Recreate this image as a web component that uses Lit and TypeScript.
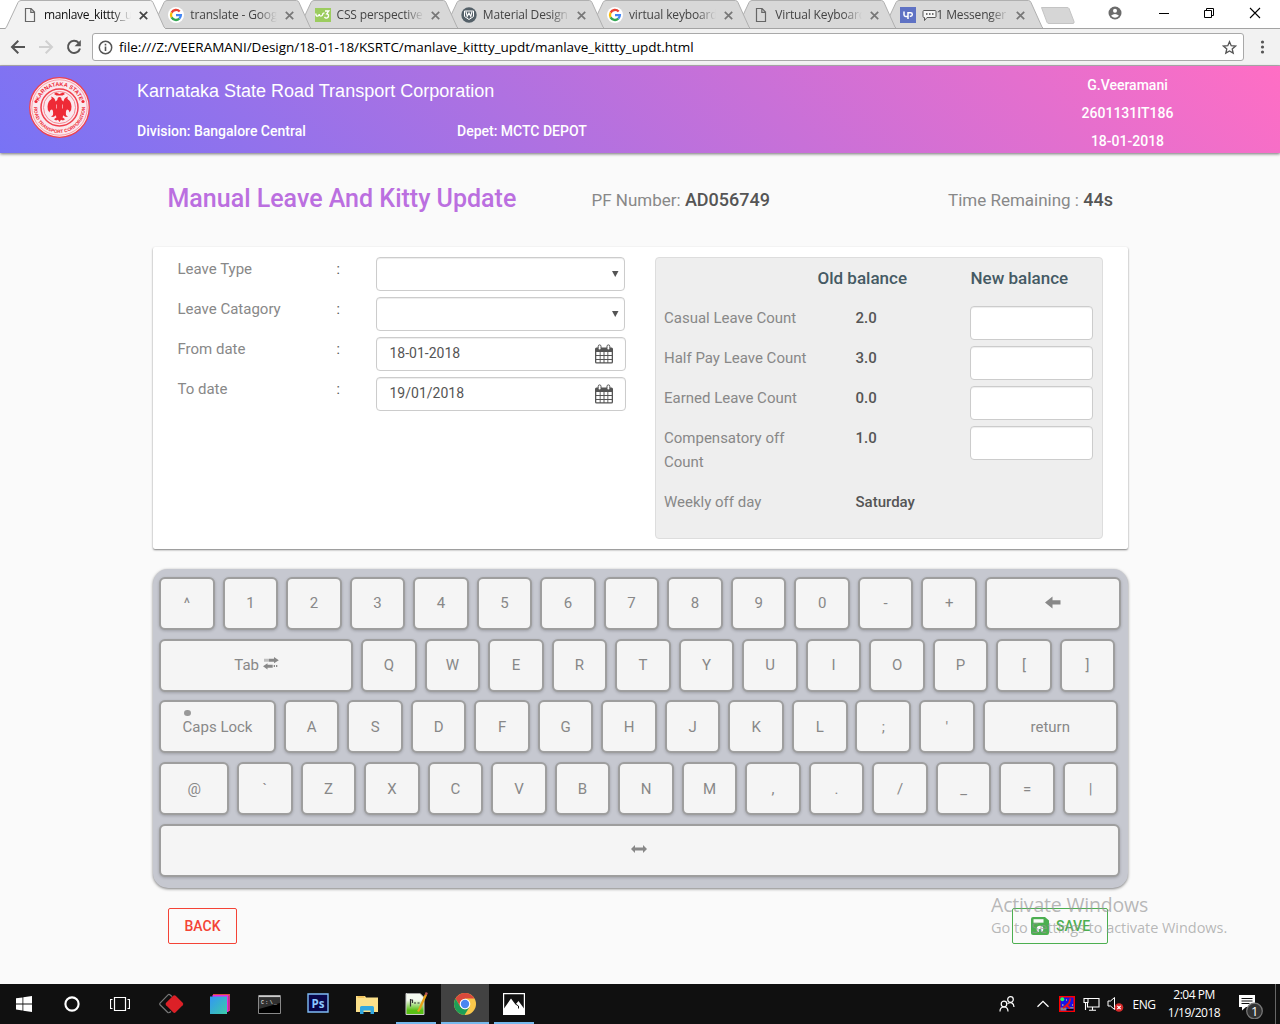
import { LitElement, html, svg, css, TemplateResult } from "lit";
import { customElement, property } from "lit/decorators.js";

const pageIcon = html`<svg width="16" height="16" viewBox="0 0 16 16"><path d="M3.500 1.500h5.600l3.400 3.600v9.400h-9z M8.800 1.700v3.700h3.500" fill="none" stroke="#666" stroke-width="1.200"/></svg>`;
const googleIcon = html`<svg width="16" height="16" viewBox="0 0 16 16"><circle cx="8" cy="8" r="8" fill="#fff"/>
  <g fill="none" stroke-width="2.300"><path d="M11.700 4.600A5 5 0 0 0 3.600 5.600" stroke="#ea4335"/><path d="M3.600 5.600a5 5 0 0 0 0 4.800" stroke="#fbbc05"/><path d="M3.600 10.400A5 5 0 0 0 11.300 11.700" stroke="#34a853"/><path d="M8 8.100H12.900A5 5 0 0 1 11.300 11.700" stroke="#4285f4"/></g></svg>`;
const w3Icon = html`<svg width="16" height="14" viewBox="0 0 16 14"><rect width="16" height="14" fill="#9ccc5f"/><path d="M.8 5.500q0 2.700 1.600 2.700T4.200 6q.3 2.200 1.700 2.200T8 5.500l1.500-.8M10 3h3.800l-2.200 2.900q2 .2 1.900 2-.2 2.200-2.200 2.200-1.200 0-1.800-1.200" fill="none" stroke="#fff" stroke-width="1.300"/></svg>`;
const materialIcon = html`<svg width="16" height="16" viewBox="0 0 16 16"><circle cx="8" cy="8" r="7.700" fill="#546068"/><path d="M3.500 4h9v5.500l-4.500 3-4.500-3z" fill="none" stroke="#fff"/><path d="M5 4.500l1.200 5L8 6l1.800 3.500 1.200-5" fill="none" stroke="#fff" stroke-width="1.100"/></svg>`;
const upIcon = html`<svg width="16" height="16" viewBox="0 0 16 16"><rect width="16" height="16" fill="#5f72c4"/><path d="M4 4.500v3.300q0 1.700 1.700 1.700H8M8 12V5.800h2.700q1.600 0 1.600 1.700t-1.600 1.700H9.800" fill="none" stroke="#fff" stroke-width="1.500"/></svg>`;

const tabs: { title: string; icon: TemplateResult; bubble?: boolean }[] = [
  { title: "manlave_kittty_updt", icon: pageIcon },
  { title: "translate - Google", icon: googleIcon },
  { title: "CSS perspective P", icon: w3Icon },
  { title: "Material Design In", icon: materialIcon },
  { title: "virtual keyboard e", icon: googleIcon },
  { title: "Virtual Keyboard", icon: pageIcon },
  { title: "1 Messenger C", icon: upIcon, bubble: true },
];

@customElement("browser-bar")
export class BrowserBar extends LitElement {
  static styles = css`
    :host { display: block; font-family: "Open Sans", "Noto Sans", sans-serif; }
    svg { display: block; flex: none; }
    .strip { display: flex; height: 28px; background: #fff; border-bottom: 1px solid #a3a3a3; padding-left: 5px; }
    .tab { position: relative; display: flex; align-items: center; width: 162px; height: 29px; margin-right: -15.750px; flex: none; }
    .shape { position: absolute; left: 0; top: 0; }
    .face { position: relative; display: flex; align-items: center; padding: 1px 0 0 17px; }
    .fav { width: 16px; display: flex; justify-content: center; }
    .title { width: 87px; margin-left: 6px; overflow: hidden; white-space: nowrap; font-size: 12px; letter-spacing: -0.150px; line-height: 20px; color: #444;
      -webkit-mask-image: linear-gradient(90deg, #000 78%, transparent); mask-image: linear-gradient(90deg, #000 78%, transparent); display: flex; align-items: center; }
    .active .title { color: #111; letter-spacing: -0.350px; }
    .close { margin-left: 7.500px; }
    .newtab { margin: 6px 0 0 11px; }
    .win { display: flex; margin-left: auto; align-items: flex-start; }
    .tools { display: flex; align-items: center; height: 36px; background: #f2f2f2; border-bottom: 1px solid #b6b4b6; padding-left: 10px; }
    .tools .b { margin-right: 12px; }
    .tools .r { margin-right: 10px; }
    .addr { display: flex; align-items: center; box-sizing: border-box; width: 1152px; height: 28px; border: 1px solid #a9a9a9; border-radius: 3px; background: #fff; padding: 0 6px 0 5px; }
    .url { font-size: 13.500px; letter-spacing: -0.020px; line-height: 20px; color: #000; margin-left: 6px; flex: 1; white-space: nowrap; }
    .dots { margin-left: 10px; }
  `;
  render() {
    return html`
      <div class="strip">
        ${tabs.map((t, i) => html`
          <div class="tab ${i ? "" : "active"}" style="z-index:${10 - i}">
            <svg class="shape" width="162" height="29"><path d="M0 28.500L1.500 27 13 2.500Q14 .5 16 .5H145.500Q147 .5 148 2.500L159 27l1.500 1.500" fill=${i ? "#d8d8d8" : "#f2f2f2"} stroke="#b0b0b0"/>
            ${i ? svg`<path d="M0 28.500H162" stroke="#a3a3a3"/>` : svg`<path d="M1 28.500H160" stroke="#f2f2f2"/>`}</svg>
            <div class="face">
              <span class="fav">${t.icon}</span>
              <span class="title">${t.bubble ? html`<svg width="15" height="13" viewBox="0 0 15 13"><path d="M2 1.500h11q1 0 1 1v5q0 1-1 1H5l-2.500 3v-3H2q-1 0-1-1v-5q0-1 1-1z" fill="#f6f6f6" stroke="#555"/><path d="M4 5h1.500M7 5h1.500M10 5h1.500" stroke="#444" stroke-width="1.500"/></svg>` : ""}${t.title}</span>
              <svg class="close" width="9" height="9" viewBox="0 0 9 9"><path d="M.8.8l7.400 7.400M8.200.8L.8 8.200" stroke=${i ? "#777" : "#444"} stroke-width="1.700"/></svg>
            </div>
          </div>`)}
        <svg class="newtab" width="36" height="19"><path d="M1.500 1.500H27q1.500 0 2 1l5 13q.5 2-1 2H9q-1.500 0-2-1.200z" fill="#d6d6d6" stroke="#c4c4c4"/></svg>
        <svg class="win" width="172" height="28" viewBox="0 0 172 28">
          <circle cx="7" cy="13" r="6.500" fill="#6b6b6b"/><circle cx="7" cy="10.700" r="2" fill="#fff"/><path d="M3 15.700q4-3.400 8 0-4 4-8 0z" fill="#fff"/>
          <g fill="none" stroke="#000"><path d="M51 13.500h10"/><path d="M96.500 10.500h7v7h-7zM98.500 10.500v-2h7v7h-2"/><path d="M142 8l10 10M152 8l-10 10" stroke-width="1.100"/></g>
        </svg>
      </div>
      <div class="tools">
        <svg class="b" width="16" height="16" viewBox="0 0 16 16"><path d="M15 8H2.500M8.300 1.800L2 8l6.300 6.200" fill="none" stroke="#555" stroke-width="2"/></svg>
        <svg class="b" width="16" height="16" viewBox="0 0 16 16"><path d="M1 8h12.500M7.700 1.800L14 8l-6.300 6.200" fill="none" stroke="#d0d0d0" stroke-width="2"/></svg>
        <svg class="r" width="16" height="16" viewBox="0 0 16 16"><path d="M12.700 3.800A6.100 6.100 0 1 0 14 9.500" fill="none" stroke="#555" stroke-width="2"/><path d="M14.800 1v6.200H8.600z" fill="#555"/></svg>
        <div class="addr">
          <svg width="15" height="15" viewBox="0 0 15 15"><circle cx="7.500" cy="7.500" r="6.200" fill="none" stroke="#555" stroke-width="1.500"/><path d="M7.500 6.500v4.500M7.500 3.800v1.600" stroke="#555" stroke-width="1.600"/></svg>
          <span class="url">file:///Z:/VEERAMANI/Design/18-01-18/KSRTC/manlave_kittty_updt/manlave_kittty_updt.html</span>
          <svg width="15" height="15" viewBox="0 0 15 15"><path d="M7.500 1.700l1.700 4 4.300.4-3.300 2.800 1 4.200-3.700-2.200-3.700 2.200 1-4.200L1.500 6.100l4.300-.4z" fill="none" stroke="#555" stroke-width="1.300"/></svg>
        </div>
        <svg class="dots" width="16" height="16"><g fill="#555"><circle cx="8.500" cy="3" r="1.600"/><circle cx="8.500" cy="8" r="1.600"/><circle cx="8.500" cy="13" r="1.600"/></g></svg>
      </div>`;
  }
}

@customElement("corp-header")
export class CorpHeader extends LitElement {
  static styles = css`
    :host { display: block; position: relative; z-index: 1; font-family: Roboto, sans-serif; }
    .bar { display: grid; grid-template-columns: 137px 320px 565px 211px; height: 87px; background: linear-gradient(45deg, #7873f5, #ff6ec4); color: #fff; box-shadow: 0 1px 3px rgba(0,0,0,.55); font-size: 14px; font-weight: 500; line-height: 28px; }
    .logo { padding: 11px 0 0 29px; }
    svg { display: block; }
    .left { grid-column: span 2; display: grid; grid-template-columns: 320px 1fr; grid-template-rows: 51px 28px; }
    .name { grid-column: span 2; font: 18px/50px "Liberation Sans", Arial, sans-serif; }
    .user { text-align: center; padding-top: 5px; }
    .ring { font: 700 5.600px "Liberation Sans", sans-serif; fill: #ee2a36; }
    .low { font-size: 4.700px; }
  `;
  render() {
    return html`<div class="bar">
      <div class="logo"><svg width="61" height="61" viewBox="0 0 61 61">
        <circle cx="30.500" cy="30.500" r="29.800" fill="#fbe9ee" stroke="#f0404e" stroke-width="1.300"/>
        <circle cx="30.500" cy="30.500" r="27.700" fill="none" stroke="#f58a94" stroke-width=".8"/>
        <circle cx="30.500" cy="30.500" r="18.500" fill="none" stroke="#f0404e" stroke-width="1.500"/>
        <circle cx="30.500" cy="30.500" r="16" fill="none" stroke="#f58a94" stroke-width="1"/>
        <defs><path id="t" d="M9 30.500a21.500 21.500 0 0 1 43 0"/><path id="u" d="M5 30.500a25.500 25.500 0 0 0 51 0"/></defs>
        <text class="ring" text-anchor="middle"><textPath href="#t" startOffset="50%">KARNATAKA STATE</textPath></text>
        <text class="ring low" text-anchor="middle"><textPath href="#u" startOffset="50%">ROAD TRANSPORT CORPORATION</textPath></text>
        <g fill="#ee2a36"><circle cx="7" cy="24.500" r="1.600"/><circle cx="54" cy="24.500" r="1.600"/>
        <path d="M30.500 20q2 0 2.200 3l1.800 1.500q.5-4 4.500-5-1.500 2 0 3 3 1.500 3.500 7 .3 4-2 6-.5-3-2.500-3-1.500 1-1 5.500l2 2-3-.2-1.500-1.500-1 2 2.500 2-2 1.200-2-.8-1.500 2.200-1.500-2.200-2 .8-2-1.200 2.500-2-1-2-1.500 1.500-3 .2 2-2q.5-4.500-1-5.500-2 0-2.500 3-2.300-2-2-6 .5-5.500 3.500-7 1.500-1 0-3 4 1 4.500 5l1.800-1.500q.2-3 2.200-3z"/>
        <path d="M25 17l2-1.500 3.500 1.500 3.500-1.500 2 1.500-2.500 1.500h-6z"/></g>
        <path d="M27.500 27.500v4M33.500 27.500v4" fill="none" stroke="#fbe9ee" stroke-width=".6"/>
      </svg></div>
      <div class="left"><div class="name">Karnataka State Road Transport Corporation</div><div>Division: Bangalore Central</div><div>Depet: MCTC DEPOT</div></div>
      <div class="user"><div>G.Veeramani</div><div>2601131IT186</div><div>18-01-2018</div></div>
    </div>`;
  }
}

const calendar = html`<svg width="20" height="20" viewBox="0 0 20 20"><path d="M1 5q0-1.500 1.500-1.500h15Q19 3.500 19 5v13q0 1.500-1.500 1.500h-15Q1 19.500 1 18z" fill="#555"/><path d="M2.300 8h3.400v3H2.300zM6.600 8h2.900v3H6.600zM10.500 8h2.900v3h-2.900zM14.300 8h3.400v3h-3.400zM2.300 12h3.400v3H2.300zM6.600 12h2.900v3H6.600zM10.500 12h2.900v3h-2.900zM14.300 12h3.400v3h-3.400zM2.300 16h3.400v2.300H2.300zM6.600 16h2.900v2.300H6.600zM10.500 16h2.900v2.300h-2.900zM14.300 16h3.400v2.300h-3.400z" fill="#fff"/><rect x="4.200" y=".9" width="2.800" height="5" rx="1.400" fill="#fff" stroke="#555"/><rect x="13" y=".9" width="2.800" height="5" rx="1.400" fill="#fff" stroke="#555"/></svg>`;

@customElement("leave-form")
export class LeaveForm extends LitElement {
  static styles = css`
    :host { display: block; font-family: Roboto, sans-serif; }
    svg { display: block; }
    .head { display: flex; align-items: flex-start; box-sizing: border-box; height: 94px; padding: 27px 0 0 14.500px; font-size: 17px; color: #888; white-space: nowrap; line-height: 39px; }
    .head h1 { margin: 0; width: 424px; font-size: 25px; font-weight: 500; color: #bb6fe0; line-height: 38px; }
    .pf { width: 356.500px; }
    .time { line-height: 40px; }
    .head b { font-size: 18px; }
    b { font-weight: 500; color: #555; }
    .card { display: flex; align-items: flex-start; box-sizing: border-box; height: 302px; padding: 10px 25px 10px 24.500px; background: #fff; border-radius: 2px; box-shadow: 0 1px 2px rgba(0,0,0,.5); color: #888; font-size: 15px; line-height: 24px; justify-content: space-between; }
    .row { display: grid; grid-template-columns: 159px 39.500px 250px; height: 40px; }
    .colon { color: #555; font-size: 14px; }
    .box { display: flex; align-items: center; justify-content: space-between; box-sizing: border-box; height: 34px; border: 1px solid #ccc; border-radius: 4px; background: #fff; box-shadow: inset 0 1px 1px rgba(0,0,0,.075); color: #555; padding: 0 11px 1px 12.500px; font-size: 14px; }
    .date { padding-bottom: 2px; }
    .select { width: 249px; justify-content: flex-end; padding-right: 5px; }
    .panel { box-sizing: border-box; width: 448px; height: 282px; border: 1px solid #ddd; border-radius: 4px; background: #eee; padding: 8px 9px 0 8px; }
    .bal { display: grid; grid-template-columns: 191.500px 114.500px 123px; min-height: 40px; }
    .bal span { max-width: 150px; }
    .bal.tall { height: 64px; }
    .bhead { height: 40px; font-size: 17px; font-weight: 500; color: #455a64; display: grid; grid-template-columns: 153.500px 153px 1fr; }
  `;
  render() {
    const arrow = html`<svg width="7" height="6"><path d="M0 0h6.500L3.250 6z" fill="#555"/></svg>`;
    const fields = [["Leave Type"], ["Leave Catagory"], ["From date", "18-01-2018"], ["To date", "19/01/2018"]];
    const bal = [["Casual Leave Count", "2.0"], ["Half Pay Leave Count", "3.0"], ["Earned Leave Count", "0.0"], ["Compensatory off Count", "1.0"], ["Weekly off day", "Saturday"]];
    return html`
      <div class="head"><h1>Manual Leave And Kitty Update</h1><div class="pf">PF Number: <b>AD056749</b></div><div class="time">Time Remaining : <b>44s</b></div></div>
      <div class="card">
        <div>${fields.map(([l, v]) => html`<div class="row"><span>${l}</span><span class="colon">:</span>
          ${v ? html`<div class="box"><span class="date">${v}</span>${calendar}</div>` : html`<div class="box select">${arrow}</div>`}</div>`)}</div>
        <div class="panel">
          <div class="bhead"><span></span><span>Old balance</span><span>New balance</span></div>
          ${bal.map(([l, v], i) => html`<div class="bal ${i === 3 ? "tall" : ""}"><span>${l}</span><b>${v}</b>${i < 4 ? html`<div class="box"></div>` : ""}</div>`)}
        </div>
      </div>`;
  }
}

@customElement("key-cap")
export class KeyCap extends LitElement {
  @property({ type: Number }) w = 55.550;
  static styles = css`
    :host { display: block; flex: none; }
    .key { display: flex; align-items: center; justify-content: center; box-sizing: border-box; height: 53px; border: 2px solid #9e9e9e; border-radius: 6px; background: #f5f5f5; box-shadow: 0 1px 3px rgba(0,0,0,.2); font: 15px/24px Roboto, sans-serif; color: #888; padding-bottom: var(--lift, 1px); }
  `;
  render() {
    return html`<div class="key" style="width:${this.w}px"><slot></slot></div>`;
  }
}

@customElement("key-board")
export class KeyBoard extends LitElement {
  static styles = css`
    :host { display: block; }
    .board { display: flex; flex-direction: column; gap: 8.720px; box-sizing: border-box; height: 319px; margin-top: 20px; padding: 8px 6.200px; background: #c6c8d0; border-radius: 15px; box-shadow: 0 1px 3px rgba(0,0,0,.5); }
    .row { display: flex; gap: 7.970px; }
    .low { --lift: 0px; }
    svg { display: block; }
    .inline { display: flex; align-items: center; gap: 4px; padding-left: 1px; }
    .inline svg { margin-top: -3px; }
    .caps { position: relative; }
    .dot { position: absolute; left: 1.500px; top: -5px; width: 7px; height: 6.500px; border-radius: 50%; background: #999; }
  `;
  render() {
    const keys = (s: string) => s.split(" ").map((k) => html`<key-cap>${k}</key-cap>`);
    return html`<div class="board">
      <div class="row">${keys("^ 1 2 3 4 5 6 7 8 9 0 - +")}<key-cap .w=${135.700}><svg width="16" height="14" viewBox="0 0 16 14"><path d="M0 6.500L7.500.500v3.700H15.500v4.300H7.500v4z" fill="#888"/></svg></key-cap></div>
      <div class="row"><key-cap .w=${194}><span class="inline">Tab <svg width="16" height="13" viewBox="0 0 16 13"><g fill="#888"><path d="M1.500 1.700h1v3h-1zM3.500 1.700h1v3h-1zM5.500 1.700H11V0l4.800 3.200L11 6.300V4.700H5.500zM9.700 7.700H4.500V6.200L0 9.300l4.500 3.200V10.700H9.700zM10.700 8h1.300v2h-1.300zM13 8h1.300v2H13z"/></g></svg></span></key-cap>${keys("Q W E R T Y U I O P [ ]")}</div>
      <div class="row low"><key-cap .w=${116.700}><span class="caps"><i class="dot"></i>Caps Lock</span></key-cap>${keys("A S D F G H J K L ; '")}<key-cap .w=${135.500}>return</key-cap></div>
      <div class="row low"><key-cap .w=${70}>@</key-cap>${keys("` Z X C V B N M , . / _ = |")}</div>
      <div class="row"><key-cap .w=${960.500}><svg width="16" height="12" viewBox="0 0 16 12"><path d="M0 5l4-4v2.500h8V1l4 4-4 4V6.500H4V9z" fill="#888"/></svg></key-cap></div>
    </div>`;
  }
}

@customElement("task-bar")
export class TaskBar extends LitElement {
  static styles = css`
    :host { display: block; font-family: "Open Sans", "Noto Sans", sans-serif; }
    .bar { display: flex; height: 40px; background: #101010; color: #fff; }
    svg { display: block; }
    .cell { display: flex; align-items: center; justify-content: center; box-sizing: border-box; width: 48px; height: 40px; flex: none; }
    .apps { display: flex; gap: 1px; margin-left: 3px; }
    .run { width: 40px; margin: 0 4px; border-bottom: 2px solid #76b9ed; padding-top: 2px; }
    .on { background: #424242; border-bottom: 2px solid #76b9ed; padding-top: 2px; }
    .ps-cell { padding-bottom: 3px; }
    .tray { display: flex; margin-left: auto; align-items: center; font-size: 12px; }
    .people { margin-left: 6px; }
    .tray .s { width: 24px; }
    .lang { width: 34px; text-align: center; letter-spacing: -0.450px; }
    .clock { width: 66px; text-align: center; line-height: 18px; letter-spacing: -0.500px; white-space: nowrap; margin: 0 3px 1px 0; }
    .edge { width: 4px; height: 40px; border-left: 1px solid #666; margin-left: 3px; }
    .ps { font: 700 13px "Open Sans", sans-serif; fill: #8cc8ff; }
    .sm { font: 5px "Liberation Mono", monospace; fill: #fff; }
    .n { font: 13px "Open Sans", sans-serif; fill: #fff; }
  `;
  render() {
    return html`<div class="bar">
      <div class="cell"><svg width="16" height="16" viewBox="0 0 16 16"><path d="M0 2.300L6.500 1.400V7.500H0zM7.300 1.300L16 0v7.500H7.300zM0 8.400h6.500v6.100L0 13.600zM7.300 8.400H16V16l-8.700-1.300z" fill="#fff"/></svg></div>
      <div class="cell"><svg width="16" height="16"><circle cx="8" cy="8" r="6.600" fill="none" stroke="#fff" stroke-width="2.100"/></svg></div>
      <div class="cell"><svg width="20" height="14" viewBox="0 0 20 14"><path d="M4.500.5h11v13h-11zM2.500 2.500h-2v9h2M17.500 2.500h2v9h-2" fill="none" stroke="#fff" stroke-width="1.200"/></svg></div>
      <div class="apps">
        <div class="cell"><svg width="26" height="22" viewBox="0 0 26 22"><path d="M14 3.500L11.500 1.500 Q10.800 1 10 1.800L2 10.200Q1.300 11 2 11.800L9.800 19.500Q10.800 20.300 13 18.500" fill="none" stroke="#777" stroke-width="1.200"/><rect x="9.700" y="4.300" width="13.500" height="13.500" rx="1.800" fill="#dc2027" transform="rotate(45 16.400 11)"/></svg></div>
        <div class="cell"><svg width="22" height="22" viewBox="0 0 22 22"><defs><linearGradient id="g" x2="1" y2="1"><stop stop-color="#3296f5"/><stop offset="1" stop-color="#3ccaa8"/></linearGradient></defs><path d="M4 1h17v17H4z" fill="#d94a3c"/><path d="M3.500 2h16v17h-16z" fill="#e32de0"/><path d="M19 3h2v14h-2z" fill="#c6308c"/><path d="M1 3.500h17V21H1z" fill="url(#g)"/></svg></div>
        <div class="cell"><svg width="23" height="19" viewBox="0 0 23 19"><path d="M.5.5h22v18H.5z" fill="#000" stroke="#888"/><path d="M1 .500h21v1.800H1z" fill="#ccc"/><path d="M1 3h21v5L1 14z" fill="#444" opacity=".7"/><text x="3" y="9" class="sm" textLength="16">C:\\_</text></svg></div>
        <div class="cell ps-cell"><svg width="22" height="20" viewBox="0 0 22 20"><path d="M1 1h20v18H1z" fill="#08064a" stroke="#7fbcf5" stroke-width="1.400"/><text x="4.500" y="14.700" class="ps" textLength="13" lengthAdjust="spacingAndGlyphs">Ps</text></svg></div>
        <div class="cell"><svg width="22" height="19" viewBox="0 0 22 19"><path d="M0 1h9l1 1.500h12V17H0z" fill="#fbe08a"/><path d="M1.500 1.500h7v1h-7z" fill="#e8a935"/><path d="M4 19v-6.500q0-1.500 1.500-1.500h11q1.500 0 1.500 1.500V19h-3.500v-3.500h-7V19z" fill="#33a8e0"/></svg></div>
        <div class="cell run"><svg width="23" height="24" viewBox="0 0 23 24"><defs><linearGradient id="n" x2="0" y2="1"><stop offset=".3" stop-color="#f5faf0"/><stop offset=".8" stop-color="#59c014"/></linearGradient></defs><path d="M1 1.500h14l4 4v17H1z" fill="url(#n)" stroke="#ccc"/><path d="M2.500 1.500h13" stroke="#777" stroke-dasharray="1 1"/><path d="M5.500 7v7.500M6 8h1.500v3M9 11h2M12.500 11h2" fill="none" stroke="#333" stroke-width="1.200"/><path d="M21 2.500L14.500 17l-1.500 2.500" fill="none" stroke="#e7a21b" stroke-width="2.300"/><path d="M21.800.5l-1 2.500" stroke="#b55" stroke-width="2.300"/></svg></div>
        <div class="cell on"><svg width="24" height="24" viewBox="0 0 24 24"><circle cx="12" cy="12" r="11" fill="#f9c74a"/><path d="M2.500 6.500A11 11 0 0 1 21.500 6.500H12L7.300 14.800z" fill="#d9493c"/><path d="M2.500 6.500L7.300 14.800 12 17.500l4.500-2.500L11.500 23A11 11 0 0 1 2.500 6.500z" fill="#1d9e57"/><circle cx="12" cy="12" r="5.300" fill="#fff"/><circle cx="12" cy="12" r="4.200" fill="#4a86f0"/></svg></div>
        <div class="cell run"><svg width="22" height="22" viewBox="0 0 22 22"><path d="M.6.600h20.800v20.800H.6z" fill="#101010" stroke="#fff" stroke-width="1.200"/><path d="M1 15.500L8 5.500l4.500 6L15.500 8l5.500 7.500V21H1z" fill="#fff"/><path d="M12.500 11l3 2v2.500" fill="none" stroke="#101010"/></svg></div>
      </div>
      <div class="tray">
        <svg width="36" height="18" viewBox="0 0 36 18"><g fill="none" stroke="#fff" stroke-width="1.200"><circle cx="21.500" cy="4.500" r="2.800"/><circle cx="15" cy="9" r="2.800"/><path d="M11 16.500q0-4.500 4-4.500t4 4.500M18.500 8.500q6-2.500 6.500 3.500"/></g></svg>
        <div class="cell s people"><svg width="12" height="8"><path d="M.5 6.800L6 1.300l5.500 5.500" fill="none" stroke="#fff" stroke-width="1.300"/></svg></div>
        <div class="cell s"><svg width="16" height="16"><path d="M.75.750h14.500v14.500H.75z" fill="#1414e8" stroke="#f00" stroke-width="1.500"/><path d="M1.500 11.500h6v3h-6zM10 11h4.500v1.500H10z" fill="#888"/><path d="M7.500 13h7v1.500h-7z" fill="#000"/><circle cx="3.300" cy="3.300" r="2" fill="#2f6"/><path d="M4 12l3.500-2.500L10 7l1.500-4.500M7 8.500l4 4" fill="none" stroke="#e11" stroke-width="1.800"/><path d="M7 4h1M3 9h1.500M13 9h1" stroke="#ff8"/></svg></div>
        <div class="cell s"><svg width="17" height="14"><path d="M3.500 1.500h12.500v8.500H4.500V6M1 1.500h4v4H1zM2.500 5.500V13M6 13.300h7M9.500 10v3" fill="none" stroke="#fff" stroke-width="1.100"/></svg></div>
        <div class="cell s"><svg width="17" height="16"><path d="M1 5h2.500l4-3.500v12l-4-3.500H1z" fill="none" stroke="#fff"/><circle cx="12" cy="11.500" r="4.300" fill="#d42a2a"/><path d="M10.300 9.800l3.400 3.400M13.700 9.800l-3.400 3.400" stroke="#fff" stroke-width="1.200"/></svg></div>
        <div class="lang">ENG</div>
        <div class="clock"><div>2:04 PM</div><div>1/19/2018</div></div>
        <svg width="42" height="30" viewBox="0 0 42 30"><path d="M9 6h16v12h-9l-4 3.500V18H9z" fill="#fff"/><path d="M11.500 9.500h11M11.500 12h11M11.500 14.500h8" stroke="#101010"/><circle cx="24.500" cy="22" r="7.800" fill="#333" stroke="#777" stroke-width="1.300"/><text class="n" x="21" y="26.500">1</text></svg>
        <div class="edge"></div>
      </div>
    </div>`;
  }
}

@customElement("app-root")
export class AppRoot extends LitElement {
  static styles = css`
    :host { display: block; width: 1280px; height: 1024px; overflow: hidden; background: #fafafa; }
    .page { box-sizing: border-box; height: 831px; width: 1128px; padding-left: 153px; }
    .actions { display: flex; justify-content: space-between; padding: 20px 20px 0 15px; }
    .btn { display: flex; align-items: center; justify-content: center; gap: 6px; box-sizing: border-box; width: 69px; height: 36px; border: 1px solid #f44336; border-radius: 2px; color: #f44336; font: 500 14px/34px Roboto, sans-serif; }
    .save { width: 96px; border-color: #4caf50; color: #4caf50; }
    .mark { position: absolute; left: 991px; top: 892px; z-index: 5; font-family: "Open Sans", "Noto Sans", sans-serif; color: rgba(150,150,150,.68); white-space: nowrap; }
    .m1 { font-size: 19.500px; line-height: 26px; letter-spacing: -0.180px; }
    .m2 { font-size: 14.500px; line-height: 20px; letter-spacing: -0.040px; }
  `;
  render() {
    return html`
      <browser-bar></browser-bar>
      <corp-header></corp-header>
      <div class="page">
        <leave-form></leave-form>
        <key-board></key-board>
        <div class="actions">
          <div class="btn">BACK</div>
          <div class="btn save"><svg width="20" height="20" viewBox="0 0 20 20"><path d="M1 3q0-2 2-2h12l4 3.500V17q0 2-2 2H3q-2 0-2-2z" fill="#4caf50"/><path d="M3.500 3.200h10v3.500h-10z" fill="#fafafa"/><circle cx="10" cy="13" r="3.300" fill="#fafafa"/><path d="M9 13h2v4H9z" fill="#4caf50"/></svg>SAVE</div>
        </div>
      </div>
      <div class="mark"><div class="m1">Activate Windows</div><div class="m2">Go to Settings to activate Windows.</div></div>
      <task-bar></task-bar>`;
  }
}
